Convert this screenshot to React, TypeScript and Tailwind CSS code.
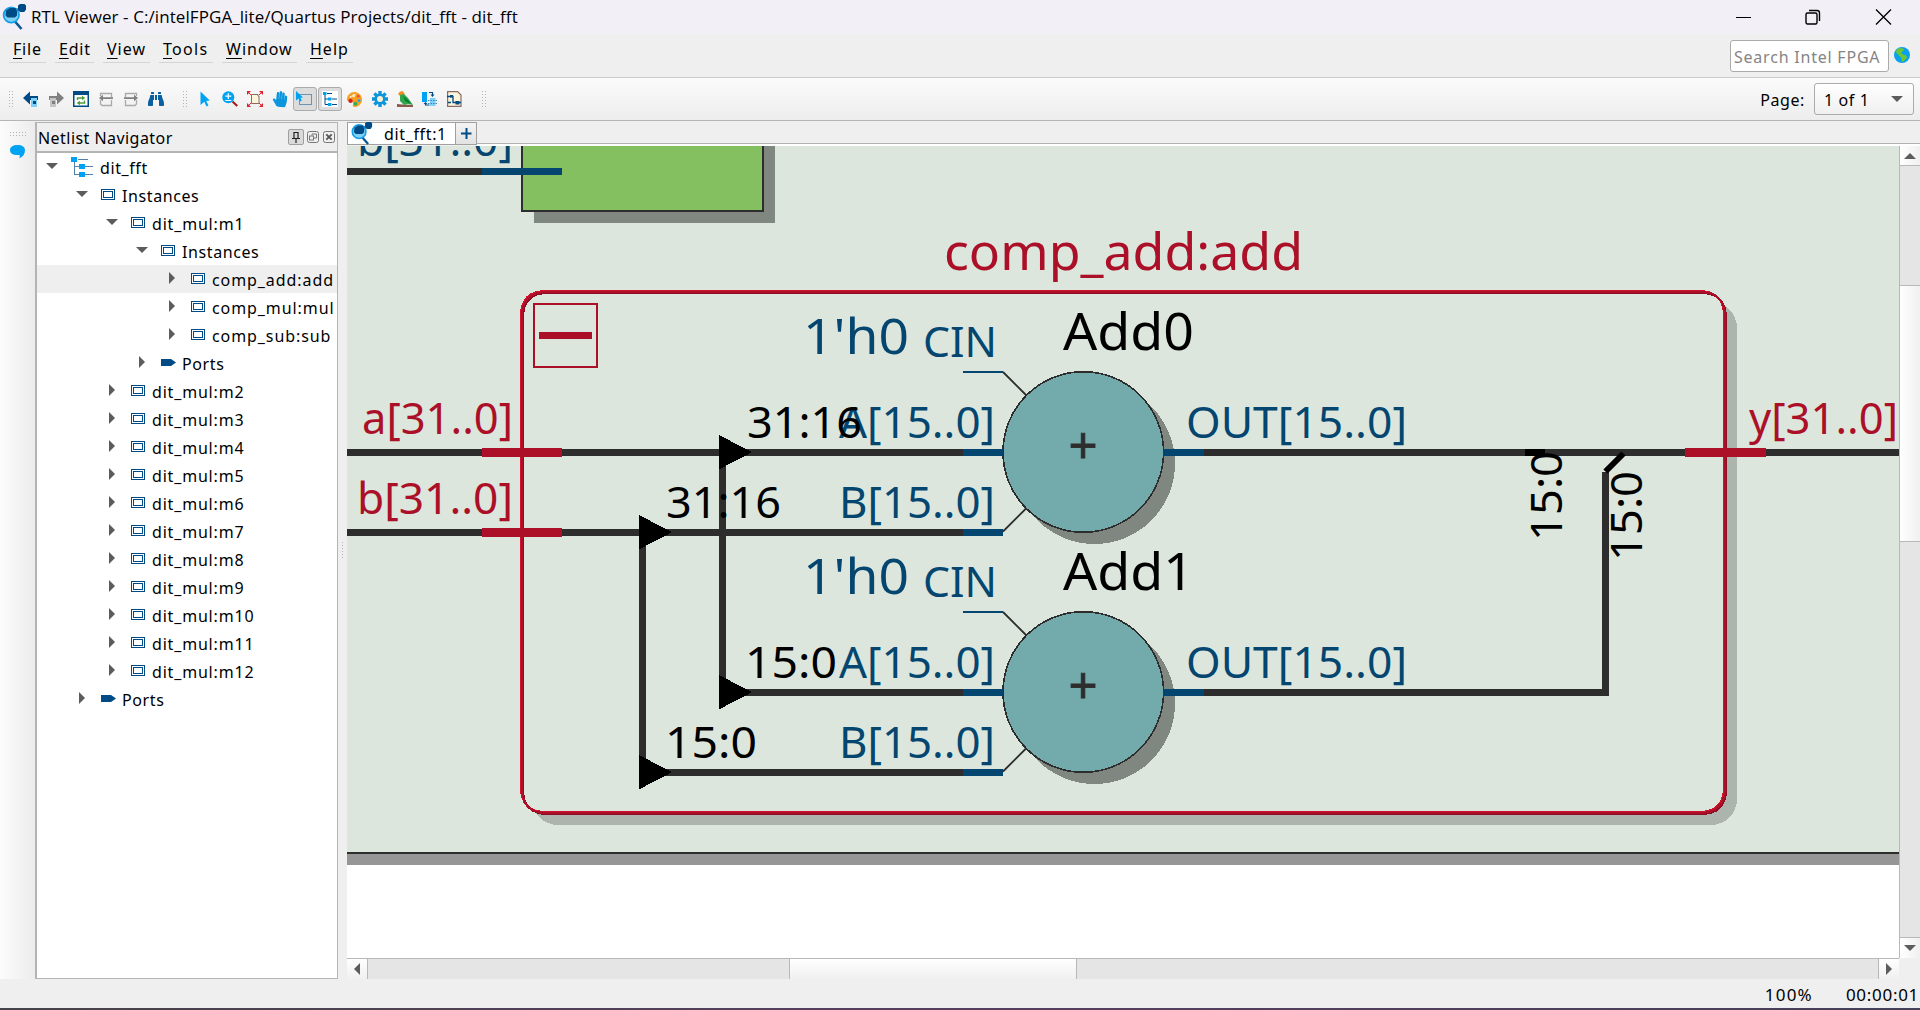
import React from "react";
import { FaBinoculars, FaHandPaper, FaPalette } from "react-icons/fa";

const NAVY = "#004a86";
const SKY = "#00a3f4";

/* ---------- Icons ---------- */

function ViewerIcon({ className }: { className: string }) {
  return (
    <svg viewBox="0 0 24 26" className={className}>
      <path d="M13 17.500l6.500 7.500" stroke="#0a5796" strokeWidth="2.600" />
      <path d="M13 5.500h5" stroke={NAVY} strokeWidth="2" />
      <circle cx="9.300" cy="11" r="7.700" fill="#7fd0f7" stroke="#14a0e6" strokeWidth="1.800" />
      <path d="M4 6.500l4-2.500h5.500l1.500 3v4.500l-2 2H5.500l-2-2z" fill={NAVY} />
      <path d="M16 1.500l2-1.500h4.500l1.500 1.500v4l-1.800 2.500H18l-2-2z" fill={NAVY} />
    </svg>
  );
}

function BackIcon({ flip, dark, light }: { flip?: boolean; dark: string; light: string }) {
  return (
    <svg width="16" height="16" viewBox="0 0 16 16">
      <path
        d={flip ? "M16 7L9 .500V5H1v4h8v4.500z" : "M0 7l7-6.500V5h8v4H7v4.500z"}
        fill={dark}
      />
      <rect x={flip ? 2 : 8} y="7" width="6" height="9" fill={light} />
      <rect x={flip ? 4 : 10} y="10" width="3" height="3" fill={dark} />
    </svg>
  );
}

function RefreshIcon() {
  return (
    <svg width="16" height="16" viewBox="0 0 16 16">
      <rect x=".75" y=".75" width="14.500" height="14.500" fill="#fff" stroke={NAVY} strokeWidth="1.500" />
      <rect width="16" height="4" fill={NAVY} />
      <path d="M4.500 9V7H10M11.500 9.500v2.500H6" fill="none" stroke="#4d9e35" strokeWidth="1.400" />
      <path d="M9 4.700L12.300 7 9 9.300zM7 9.700L3.700 12 7 14.300z" fill="#4d9e35" />
    </svg>
  );
}

function PageArrowIcon({ flip }: { flip?: boolean }) {
  return (
    <svg width="14" height="15" viewBox="0 0 14 15" className={flip ? "-scale-x-100" : ""}>
      <path d="M1.500 4V1.500h11V5M1.500 8v4l1.500 1.500h9.500V8" fill="none" stroke="#aaa" strokeWidth="1.300" />
      <path d="M0 6l4-3.300V5.200h10v1.800H4v2.300z" fill="#808080" />
    </svg>
  );
}

function CursorIcon() {
  return (
    <svg width="10" height="16" viewBox="0 0 10 16">
      <path d="M.5.500L9.800 9.500 6.200 10l2.300 4.500-2 1L4.300 10.800.5 14z" fill={SKY} />
    </svg>
  );
}

function ZoomIcon() {
  return (
    <svg width="16" height="16" viewBox="0 0 16 16">
      <path d="M10.500 10.500L15.300 15" stroke="#a81c1c" strokeWidth="2.200" />
      <circle cx="6.300" cy="6.300" r="6" fill={SKY} />
      <path d="M3.300 5.200h6M6.300 2.300v5.800M3.300 9.500h6" stroke="#fff" strokeWidth="1.200" />
    </svg>
  );
}

function FitIcon() {
  return (
    <svg width="16" height="16" viewBox="0 0 16 16">
      <path d="M4.500 3.500h6.500v1.500h1v7.500H4.500z" fill="#fdf4da" stroke="#8a6c66" />
      <path d="M0 0h4L0 4zM16 0h-4l4 4zM0 16h4l-4-4zM16 16h-4l4-4z" fill="#e0202c" />
      <path d="M1 1l3 3M15 1l-3 3M1 15l3-3M15 15l-3-3" stroke="#e0202c" />
    </svg>
  );
}

function SelectIcon() {
  return (
    <svg width="17" height="16" viewBox="0 0 17 16">
      <rect x="3.500" y="3.500" width="12" height="10" fill="none" stroke={NAVY} strokeDasharray="1 1" />
      <path d="M0 0l7 6.500-2.500.3 1.300 3-1.600.8L2.800 7.400 0 9.500z" fill={SKY} />
    </svg>
  );
}

function HierarchyIcon() {
  return (
    <svg width="16" height="16" viewBox="0 0 16 16">
      <rect width="16" height="16" fill="#fff" />
      <path d="M3 3v10.500M3 8h3M3 13.500h3M5 2.500h5M10 8h5M10 13.500h5" stroke={NAVY} fill="none" />
      <path d="M1 1h3.500v3H1zM6 6.500h3.500v3H6zM6 12h3.500v3H6z" fill={SKY} />
    </svg>
  );
}

function PaletteIcon() {
  return (
    <span className="relative block size-[15px]">
      <FaPalette className="size-[15px] -scale-x-100 text-[#fa9f1c]" />
      <svg viewBox="0 0 16 16" className="absolute inset-0 size-[15px]">
        <circle cx="3.800" cy="9.500" r="2.300" fill="#d3202b" />
        <circle cx="7" cy="4" r="1.700" fill="#fce9c0" />
        <circle cx="12" cy="4.500" r="1.600" fill="#e5523a" />
        <circle cx="9" cy="12.500" r="2" fill="#2bb24c" />
        <circle cx="12.800" cy="9" r="1.600" fill="#2d9fe6" />
      </svg>
    </span>
  );
}

function GearIcon() {
  return (
    <svg width="16" height="16" viewBox="0 0 16 16">
      <g stroke="#0a95dc" strokeWidth="3.400">
        <path d="M8 0v16M0 8h16M2.400 2.400l11.200 11.200M13.600 2.400L2.400 13.600" />
      </g>
      <circle cx="8" cy="8" r="5.600" fill="#0a95dc" />
      <circle cx="8" cy="8" r="3" fill="#fdf0cf" />
    </svg>
  );
}

function BirdIcon() {
  return (
    <svg width="16" height="16" viewBox="0 0 16 16">
      <path d="M0 13l5 .5L16 14v2H0z" fill="#8a5a4c" />
      <path d="M1 3l2-2.500L6 .3l1.500 2.500L7 6 3 5z" fill="#f58a1f" />
      <path d="M3 4l4-1 4 4 5 7-5-1-4 1-4-4z" fill="#2ea84a" />
      <path d="M6 5l5 4 3 4-6-3z" fill="#0d7a35" />
    </svg>
  );
}

function SwapIcon() {
  return (
    <svg width="15" height="16" viewBox="0 0 15 16">
      <rect width="5" height="10" y="1" fill={SKY} />
      <rect x="8" y="7" width="5.500" height="8" fill="#7fd0f7" />
      <path d="M7 1.500h3.500V4M7.500 14H3.500v-2" fill="none" stroke={NAVY} strokeWidth="1.200" />
      <path d="M8.500 3.500h4l-2 2.500zM1.500 13h4l-2-2z" fill={NAVY} />
      <path d="M6 9.500h9M6 12.500h9" stroke="#3f86b8" strokeDasharray="1.500 1" />
    </svg>
  );
}

function NetIcon() {
  return (
    <svg width="15" height="16" viewBox="0 0 15 16">
      <path d="M.6.600h10L14 4v11.400H.6z" fill="#fdf4da" stroke="#8a6c66" strokeWidth="1.200" />
      <path d="M0 5.500h6v6h8M1 11.500h3" fill="none" stroke={NAVY} strokeWidth="1.300" />
      <rect x="8.500" y="10" width="4" height="3.500" fill={NAVY} />
      <rect x="3" y="4" width="3" height="2.500" fill={NAVY} />
    </svg>
  );
}

function ModuleIcon() {
  return (
    <svg width="14" height="11" viewBox="0 0 14 11" shapeRendering="crispEdges">
      <rect x=".5" y=".5" width="13" height="10" fill="#fff" stroke={NAVY} />
      <rect x="2.500" y="2.500" width="9" height="6" fill="#fff" stroke={NAVY} />
    </svg>
  );
}

function PortIcon() {
  return (
    <svg width="15" height="7" viewBox="0 0 15 7">
      <path d="M0 0h10l5 3.500L10 7H0z" fill={NAVY} />
    </svg>
  );
}

function RootIcon() {
  return (
    <svg width="22" height="22" viewBox="0 0 22 22" shapeRendering="crispEdges">
      <path d="M3.500 4v15M3 10.500h6M3 18.500h6M7 3.500h10M13 10.500h9M13 18.500h9" stroke="#5580ab" fill="none" />
      <path d="M0 1h6v5H0zM8 8h6v5H8zM8 16h6v5H8z" fill={SKY} />
    </svg>
  );
}

function Grip({ className }: { className: string }) {
  return (
    <span
      className={`block bg-[radial-gradient(circle,#b4b4b4_0.7px,transparent_0.9px)] bg-[length:3px_3px] ${className}`}
    />
  );
}

type Dir = "up" | "down" | "left" | "right";
const ARROWS: Record<Dir, string> = {
  up: "M0 6L6 0l6 6z",
  down: "M0 0h12L6 6z",
  left: "M6 0v12L0 6z",
  right: "M0 0v12l6-6z",
};
function Arrow({ dir }: { dir: Dir }) {
  const tall = dir === "left" || dir === "right";
  return (
    <svg width={tall ? 6 : 12} height={tall ? 12 : 6} className="shrink-0">
      <path d={ARROWS[dir]} fill="#5c5c5c" />
    </svg>
  );
}

/* ---------- Bars ---------- */

function TitleBar() {
  return (
    <header className="flex h-[34px] shrink-0 items-center bg-[#f2eff7] pl-[2px] text-black">
      <ViewerIcon className="mt-[-1px] h-[26px] w-6" />
      <h1 className="ml-[5px] grow whitespace-nowrap font-['Open_Sans',sans-serif] text-[17px] leading-[34px] tracking-[0.08px]">
        RTL Viewer - C:/intelFPGA_lite/Quartus Projects/dit_fft - dit_fft
      </h1>
      <div className="flex items-center gap-[54px] pr-[28px]">
        <svg width="16" height="16"><path d="M1 8.500h15" stroke="#000" strokeWidth="1" /></svg>
        <svg width="16" height="16" fill="none" stroke="#000" strokeWidth="1.400">
          <rect x="1" y="4" width="11" height="11" rx="1.500" />
          <path d="M4 1.500h8Q14.500 1.500 14.500 4v8" />
        </svg>
        <svg width="17" height="16"><path d="M1 .500l15 15M16 .500l-15 15" stroke="#000" strokeWidth="1.300" /></svg>
      </div>
    </header>
  );
}

const MENUS = [
  { key: "F", rest: "ile", box: "w-[37px] tracking-[0.8px]" },
  { key: "E", rest: "dit", box: "w-[39px] tracking-[0.8px]" },
  { key: "V", rest: "iew", box: "w-[47px] tracking-[1px]" },
  { key: "T", rest: "ools", box: "w-[54px] tracking-[1.3px]" },
  { key: "W", rest: "indow", box: "w-[75px] tracking-[1px]" },
  { key: "H", rest: "elp", box: "w-[47px] tracking-[1px]" },
];

function MenuBar() {
  return (
    <nav className="flex h-[44px] shrink-0 items-start border-b border-[#cbcbcb] bg-[#efefef] pl-[9px]">
      <ul className="flex grow gap-[9px] pt-[4px]">
        {MENUS.map((m) => (
          <li key={m.key} className={`h-[25px] whitespace-nowrap border-b border-[#d4d4d4] pl-[4px] leading-[22px] ${m.box}`}>
            <span className="underline decoration-1 underline-offset-[3px]">{m.key}</span>
            {m.rest}
          </li>
        ))}
      </ul>
      <div className="mt-[6px] flex h-8 w-[159px] items-center rounded-[3px] border border-[#ababab] bg-white pt-px pl-[3px] tracking-[0.78px] whitespace-nowrap text-[#858585]">
        Search Intel FPGA
      </div>
      <svg width="16" height="16" viewBox="0 0 16 16" className="mt-[13px] mr-[10px] ml-[5px]">
        <circle cx="8" cy="8" r="8" fill="#0aa0f0" />
        <path d="M2 3.500L5 1l4 .5 1 2L7.500 5 8 7l4 1.500 1 2L10 14l-2 1-.500-4L5 8.500 2.500 6z" fill="#6cc832" />
      </svg>
    </nav>
  );
}

function Tool({ on, children }: { on?: boolean; children?: React.ReactNode }) {
  return (
    <span className="flex h-6 w-[25px] items-center justify-center">
      {on ? (
        <span className="flex size-6 items-center justify-center rounded-[3px] border border-[#ababab] bg-[#dcdcdc]">
          {children}
        </span>
      ) : (
        children
      )}
    </span>
  );
}

function ToolBar() {
  return (
    <div className="flex h-[43px] shrink-0 items-center border-b border-[#b4b4b4] bg-linear-to-b from-[#fbfbfb] to-[#ededed] pl-[8px]">
      <Grip className="h-[18px] w-[6px]" />
      <div className="ml-[4px] flex">
        <Tool><BackIcon dark={NAVY} light="#7fd0f7" /></Tool>
        <Tool><BackIcon flip dark="#808080" light="#c4c4c4" /></Tool>
        <Tool><RefreshIcon /></Tool>
        <Tool><PageArrowIcon /></Tool>
        <Tool><PageArrowIcon flip /></Tool>
        <Tool><FaBinoculars className="size-4 text-[#0a5f9e]" /></Tool>
      </div>
      <Grip className="ml-[14px] h-[18px] w-[6px]" />
      <div className="ml-[4px] flex">
        <Tool><CursorIcon /></Tool>
        <Tool><ZoomIcon /></Tool>
        <Tool><FitIcon /></Tool>
        <Tool><FaHandPaper className="size-4 rotate-6 text-[#0a95dc]" /></Tool>
        <Tool on><SelectIcon /></Tool>
        <Tool on><HierarchyIcon /></Tool>
        <Tool><PaletteIcon /></Tool>
        <Tool><GearIcon /></Tool>
        <Tool><BirdIcon /></Tool>
        <Tool><SwapIcon /></Tool>
        <Tool><NetIcon /></Tool>
      </div>
      <Grip className="ml-[14px] h-[18px] w-[6px]" />
      <div className="grow" />
      <span className="mt-[2px] mr-[9px] tracking-[0.6px]">Page:</span>
      <div className="mr-[6px] flex h-8 w-[100px] items-center justify-between rounded-[3px] border border-[#ababab] bg-linear-to-b from-white to-[#f0f0f0] pr-[10px] pl-[9px]">
        <span className="mt-[2px] tracking-[0.6px]">1 of 1</span>
        <Arrow dir="down" />
      </div>
    </div>
  );
}

/* ---------- Netlist navigator ---------- */

type Row = { depth: number; label: string; open?: boolean; kind?: "root" | "port"; selected?: boolean };
const ROWS: Row[] = [
  { depth: 0, label: "dit_fft", open: true, kind: "root" },
  { depth: 1, label: "Instances", open: true },
  { depth: 2, label: "dit_mul:m1", open: true },
  { depth: 3, label: "Instances", open: true },
  { depth: 4, label: "comp_add:add", selected: true },
  { depth: 4, label: "comp_mul:mul" },
  { depth: 4, label: "comp_sub:sub" },
  { depth: 3, label: "Ports", kind: "port" },
  ...[2, 3, 4, 5, 6, 7, 8, 9, 10, 11, 12].map((n) => ({ depth: 2, label: `dit_mul:m${n}` })),
  { depth: 1, label: "Ports", kind: "port" },
];
const INDENT = ["pl-[5px]", "pl-[35px]", "pl-[65px]", "pl-[95px]", "pl-[125px]"];
const TRACK = ["tracking-[0.6px]", "tracking-[0.6px]", "tracking-[0.82px]", "tracking-[0.6px]", "tracking-[0.92px]"];

function TreeRow({ row }: { row: Row }) {
  return (
    <li className={`flex h-7 items-center overflow-hidden whitespace-nowrap ${INDENT[row.depth]} ${row.selected ? "bg-[#efefef]" : ""}`}>
      <span className="mb-[2px] flex w-5 shrink-0 justify-center">
        <Arrow dir={row.open ? "down" : "right"} />
      </span>
      <span className={`mb-px ml-[9px] shrink-0 ${row.kind === "root" ? "w-[29px]" : "w-[21px]"}`}>
        {row.kind === "root" ? <RootIcon /> : row.kind === "port" ? <PortIcon /> : <ModuleIcon />}
      </span>
      <span className={`mt-[2px] ${TRACK[row.depth]}`}>{row.label}</span>
    </li>
  );
}

function Navigator() {
  return (
    <aside className="mt-px flex w-[303px] shrink-0 flex-col border border-l-2 border-[#b4b4b4] bg-white">
      <div className="flex h-[30px] shrink-0 items-center border-b-2 border-[#b4b4b4] bg-[#efefef] pr-[2px] pl-[1px]">
        <h2 className="mt-px grow tracking-[0.45px]">Netlist Navigator</h2>
        <span className="mr-[3px] flex size-4 items-center justify-center rounded-[2px] border border-[#a0a0a0] bg-[#dadada]">
          <svg width="10" height="12" fill="none" stroke="#222" strokeWidth="1.200"><path d="M3 7V1.500h4V7M1 7.500h8M5 7.500V12" /></svg>
        </span>
        <svg width="12" height="12" fill="none" stroke="#777" className="mr-[4px]">
          <rect x=".5" y=".5" width="11" height="11" rx="2" />
          <rect x="2.500" y="5" width="4" height="4" />
          <path d="M5 4.500V3h4.500v4H7" />
        </svg>
        <svg width="12" height="12" fill="none" stroke="#777">
          <rect x=".5" y=".5" width="11" height="11" rx="2" />
          <path d="M3.300 3.300l5.400 5.400M8.700 3.300L3.300 8.700" stroke="#555" strokeWidth="1.800" />
        </svg>
      </div>
      <ul>
        {ROWS.map((r, i) => (
          <TreeRow key={i} row={r} />
        ))}
      </ul>
    </aside>
  );
}

/* ---------- Schematic ---------- */

const WIRE = "#2d2d2d";
const PIN = "#04466f";
const RED = "#ab1028";
const PAPER = "#dce6dd";

type LabelProps = { x: number; y: number; w: number; size?: number; fill?: string; children: string };
function Label({ x, y, w, size = 43, fill = "#000", children }: LabelProps) {
  return (
    <text x={x} y={y} fontSize={size} fill={fill} textLength={w} lengthAdjust="spacingAndGlyphs">
      {children}
    </text>
  );
}

function Adder({ name, dy }: { name: string; dy: number }) {
  return (
    <g transform={`translate(0 ${dy})`}>
      <g shapeRendering="crispEdges">
        <circle cx="1094.500" cy="463.500" r="80.500" fill="#808680" />
        <circle cx="1083.300" cy="452" r="80.300" fill="#73abad" stroke={WIRE} strokeWidth="1.600" />
        <path d="M963 452.500h40M963 532.500h40M1163 452.500h41" stroke={PIN} strokeWidth="7" />
        <path d="M963 372h40" stroke={PIN} strokeWidth="2" />
      </g>
      <path d="M1003 372l23 23M1003 531.500l23-23" stroke={WIRE} strokeWidth="1.800" />
      <Label x={803} y={354} w={106} size={50} fill={PIN}>1'h0</Label>
      <Label x={923} y={357} w={74} size={42} fill={PIN}>CIN</Label>
      <Label x={1063} y={350} w={131} size={51}>{name}</Label>
      <text x="1068.500" y="464" fontSize="51" fill={WIRE} stroke={WIRE} strokeWidth=".8">+</text>
      <Label x={839} y={437.5} w={156} fill={PIN}>A[15..0]</Label>
      <Label x={839} y={517.5} w={156} fill={PIN}>B[15..0]</Label>
      <Label x={1186} y={437.5} w={221} fill={PIN}>OUT[15..0]</Label>
    </g>
  );
}

function Schematic() {
  const outline = "M547 292H1700Q1725 292 1725 317V788Q1725 813 1700 813H547Q522 813 522 788V317Q522 292 547 292Z";
  return (
    <svg viewBox="347 146 1552 812" className="block h-[812px] w-[1552px]" fontFamily="'Noto Sans', sans-serif">
      <g shapeRendering="crispEdges">
        <rect x="347" y="146" width="1552" height="812" fill="#fff" />
        <rect x="347" y="146" width="1552" height="706" fill={PAPER} />
        <rect x="347" y="852" width="1552" height="2" fill={WIRE} />
        <rect x="347" y="854" width="1552" height="11" fill="#969696" />
        <rect x="534" y="140" width="241" height="83" fill="#808680" />
        <rect x="522" y="140" width="241" height="71" fill="#84c060" stroke={WIRE} strokeWidth="2" />
        <path d="M347 171.500h135" stroke={WIRE} strokeWidth="7" />
        <path d="M482 171.500h80" stroke={PIN} strokeWidth="7" />
        <rect x="532" y="302" width="1205" height="523" rx="26" fill="#adb4ad" />
        <path d={outline} fill={PAPER} />
        <path d={outline} fill="none" stroke="#d0122f" strokeWidth="2" transform="translate(-1 -1)" />
        <path d={outline} fill="none" stroke="#8c0d21" strokeWidth="2" transform="translate(1 1)" />
        <path d={outline} fill="none" stroke={RED} strokeWidth="2" />
        <rect x="534" y="304" width="63" height="63" fill="none" stroke={RED} strokeWidth="2" />
        <rect x="539" y="332" width="53" height="7" fill={RED} />
        <g stroke={WIRE} strokeWidth="7" fill="none">
          <path d="M347 452.500H963M1204 452.500H1899M347 532.500H963" />
          <path d="M722.500 452V692.500H963M642.500 532V772.500H963" />
          <path d="M1204 692.500H1605.500V472" />
        </g>
        <path d="M482 452.500h80M482 532.500h80M1685 452.500h81" stroke={RED} strokeWidth="9" />
        <path d="M719 435l33 17.200-33 17.200zM639 515l33 17.200-33 17.200zM719 675l33 17.200-33 17.200zM639 755l33 17.200-33 17.200z" />
        <path d="M1525 452.500h20" stroke="#000" strokeWidth="7" />
      </g>
      <path d="M1605.500 471.500l18-18" stroke="#000" strokeWidth="6" />
      <Label x={357} y={156} w={156} fill={PIN}>b[31..0]</Label>
      <Label x={362} y={433.5} w={151} fill={RED}>a[31..0]</Label>
      <Label x={357} y={513.5} w={156} fill={RED}>b[31..0]</Label>
      <Label x={1749} y={433.5} w={149} fill={RED}>y[31..0]</Label>
      <Label x={944} y={270} w={359} size={51} fill={RED}>comp_add:add</Label>
      <Adder name="Add0" dy={0} />
      <Adder name="Add1" dy={240} />
      <Label x={747} y={437.5} w={115}>31:16</Label>
      <Label x={666} y={517.5} w={115}>31:16</Label>
      <Label x={745} y={677.5} w={92}>15:0</Label>
      <Label x={665} y={757.5} w={92}>15:0</Label>
      <g transform="translate(1561.500 541) rotate(-90)"><Label x={0} y={0} w={90}>15:0</Label></g>
      <g transform="translate(1641.500 561) rotate(-90)"><Label x={0} y={0} w={90}>15:0</Label></g>
    </svg>
  );
}

/* ---------- Document area ---------- */

function Tabs() {
  return (
    <div className="flex h-[25px] shrink-0 items-start pt-px">
      <div className="z-10 flex h-[23px] w-[109px] shrink-0 items-center border border-[#a0a0a0] bg-white pl-[1px]">
        <ViewerIcon className="h-[23px] w-[25px]" />
        <span className="mt-px ml-[10px] leading-[22px] whitespace-nowrap tracking-[0.65px]">dit_fft:1</span>
      </div>
      <div className="flex h-[23px] w-[21px] shrink-0 items-center justify-center border border-l-0 border-[#a0a0a0] bg-linear-to-b from-[#f4f4f4] to-[#e2e2e2]">
        <svg width="11" height="11"><path d="M0 5.500h10.500M5.500 0v11" stroke={NAVY} strokeWidth="2" /></svg>
      </div>
      <div className="mt-[21px] h-[3px] grow border-t border-[#b0b0b0] bg-white" />
    </div>
  );
}

function VScroll() {
  return (
    <div className="flex w-[21px] shrink-0 flex-col border-l border-[#b8b8b8] bg-[#e5e5e5]">
      <div className="flex h-[20px] items-center justify-center border-b border-[#b8b8b8] bg-linear-to-r from-white to-[#f0f0f0]"><Arrow dir="up" /></div>
      <div className="mt-[119px] h-[257px] border-y border-[#b8b8b8] bg-linear-to-r from-white to-[#f0f0f0]" />
      <div className="grow" />
      <div className="flex h-[21px] items-center justify-center border-t border-[#b8b8b8] bg-linear-to-r from-white to-[#f0f0f0]"><Arrow dir="down" /></div>
    </div>
  );
}

function HScroll() {
  return (
    <div className="flex h-[21px] w-[1552px] shrink-0 border-t border-[#b8b8b8] bg-[#e5e5e5]">
      <div className="flex w-[21px] items-center justify-center border-r border-[#b8b8b8] bg-linear-to-b from-white to-[#f0f0f0]"><Arrow dir="left" /></div>
      <div className="ml-[421px] w-[288px] border-x border-[#b8b8b8] bg-linear-to-b from-white to-[#f0f0f0]" />
      <div className="grow" />
      <div className="flex w-[21px] items-center justify-center border-l border-[#b8b8b8] bg-linear-to-b from-white to-[#f0f0f0]"><Arrow dir="right" /></div>
    </div>
  );
}

export default function App() {
  return (
    <div className="flex h-[1010px] w-[1920px] flex-col overflow-hidden bg-[#efefef] font-['Noto_Sans',sans-serif] text-[16px] leading-6 text-black">
      <TitleBar />
      <MenuBar />
      <ToolBar />
      <div className="flex h-[858px] shrink-0">
        <div className="flex w-[35px] shrink-0 flex-col items-center bg-linear-to-r from-[#fcfcfc] to-[#ececec] pt-[10px]">
          <Grip className="h-[6px] w-[18px]" />
          <svg width="15" height="14" viewBox="0 0 15 14" className="mt-[8px]">
            <path d="M7.500 0C12 0 15 2 15 5c0 4-2 7-6 8.500.800-1 1-2.500.500-3.500C4 10.500 0 9 0 5 0 2 3 0 7.500 0z" fill={SKY} />
          </svg>
        </div>
        <Navigator />
        <div className="flex w-[9px] shrink-0 items-center justify-center"><Grip className="h-[18px] w-[3px]" /></div>
        <main className="flex w-[1573px] shrink-0 flex-col">
          <Tabs />
          <div className="flex h-[812px] shrink-0">
            <Schematic />
            <VScroll />
          </div>
          <HScroll />
        </main>
      </div>
      <footer className="flex h-[29px] shrink-0 items-center justify-end gap-[33px] pt-[2px] pr-[1px] text-[17px]">
        <span className="tracking-[1.2px]">100%</span>
        <span className="tracking-[0.7px]">00:00:01</span>
      </footer>
      <div className="h-[2px] shrink-0 bg-linear-to-r from-[#46434a] via-[#573f60] to-[#46405a]" />
    </div>
  );
}
